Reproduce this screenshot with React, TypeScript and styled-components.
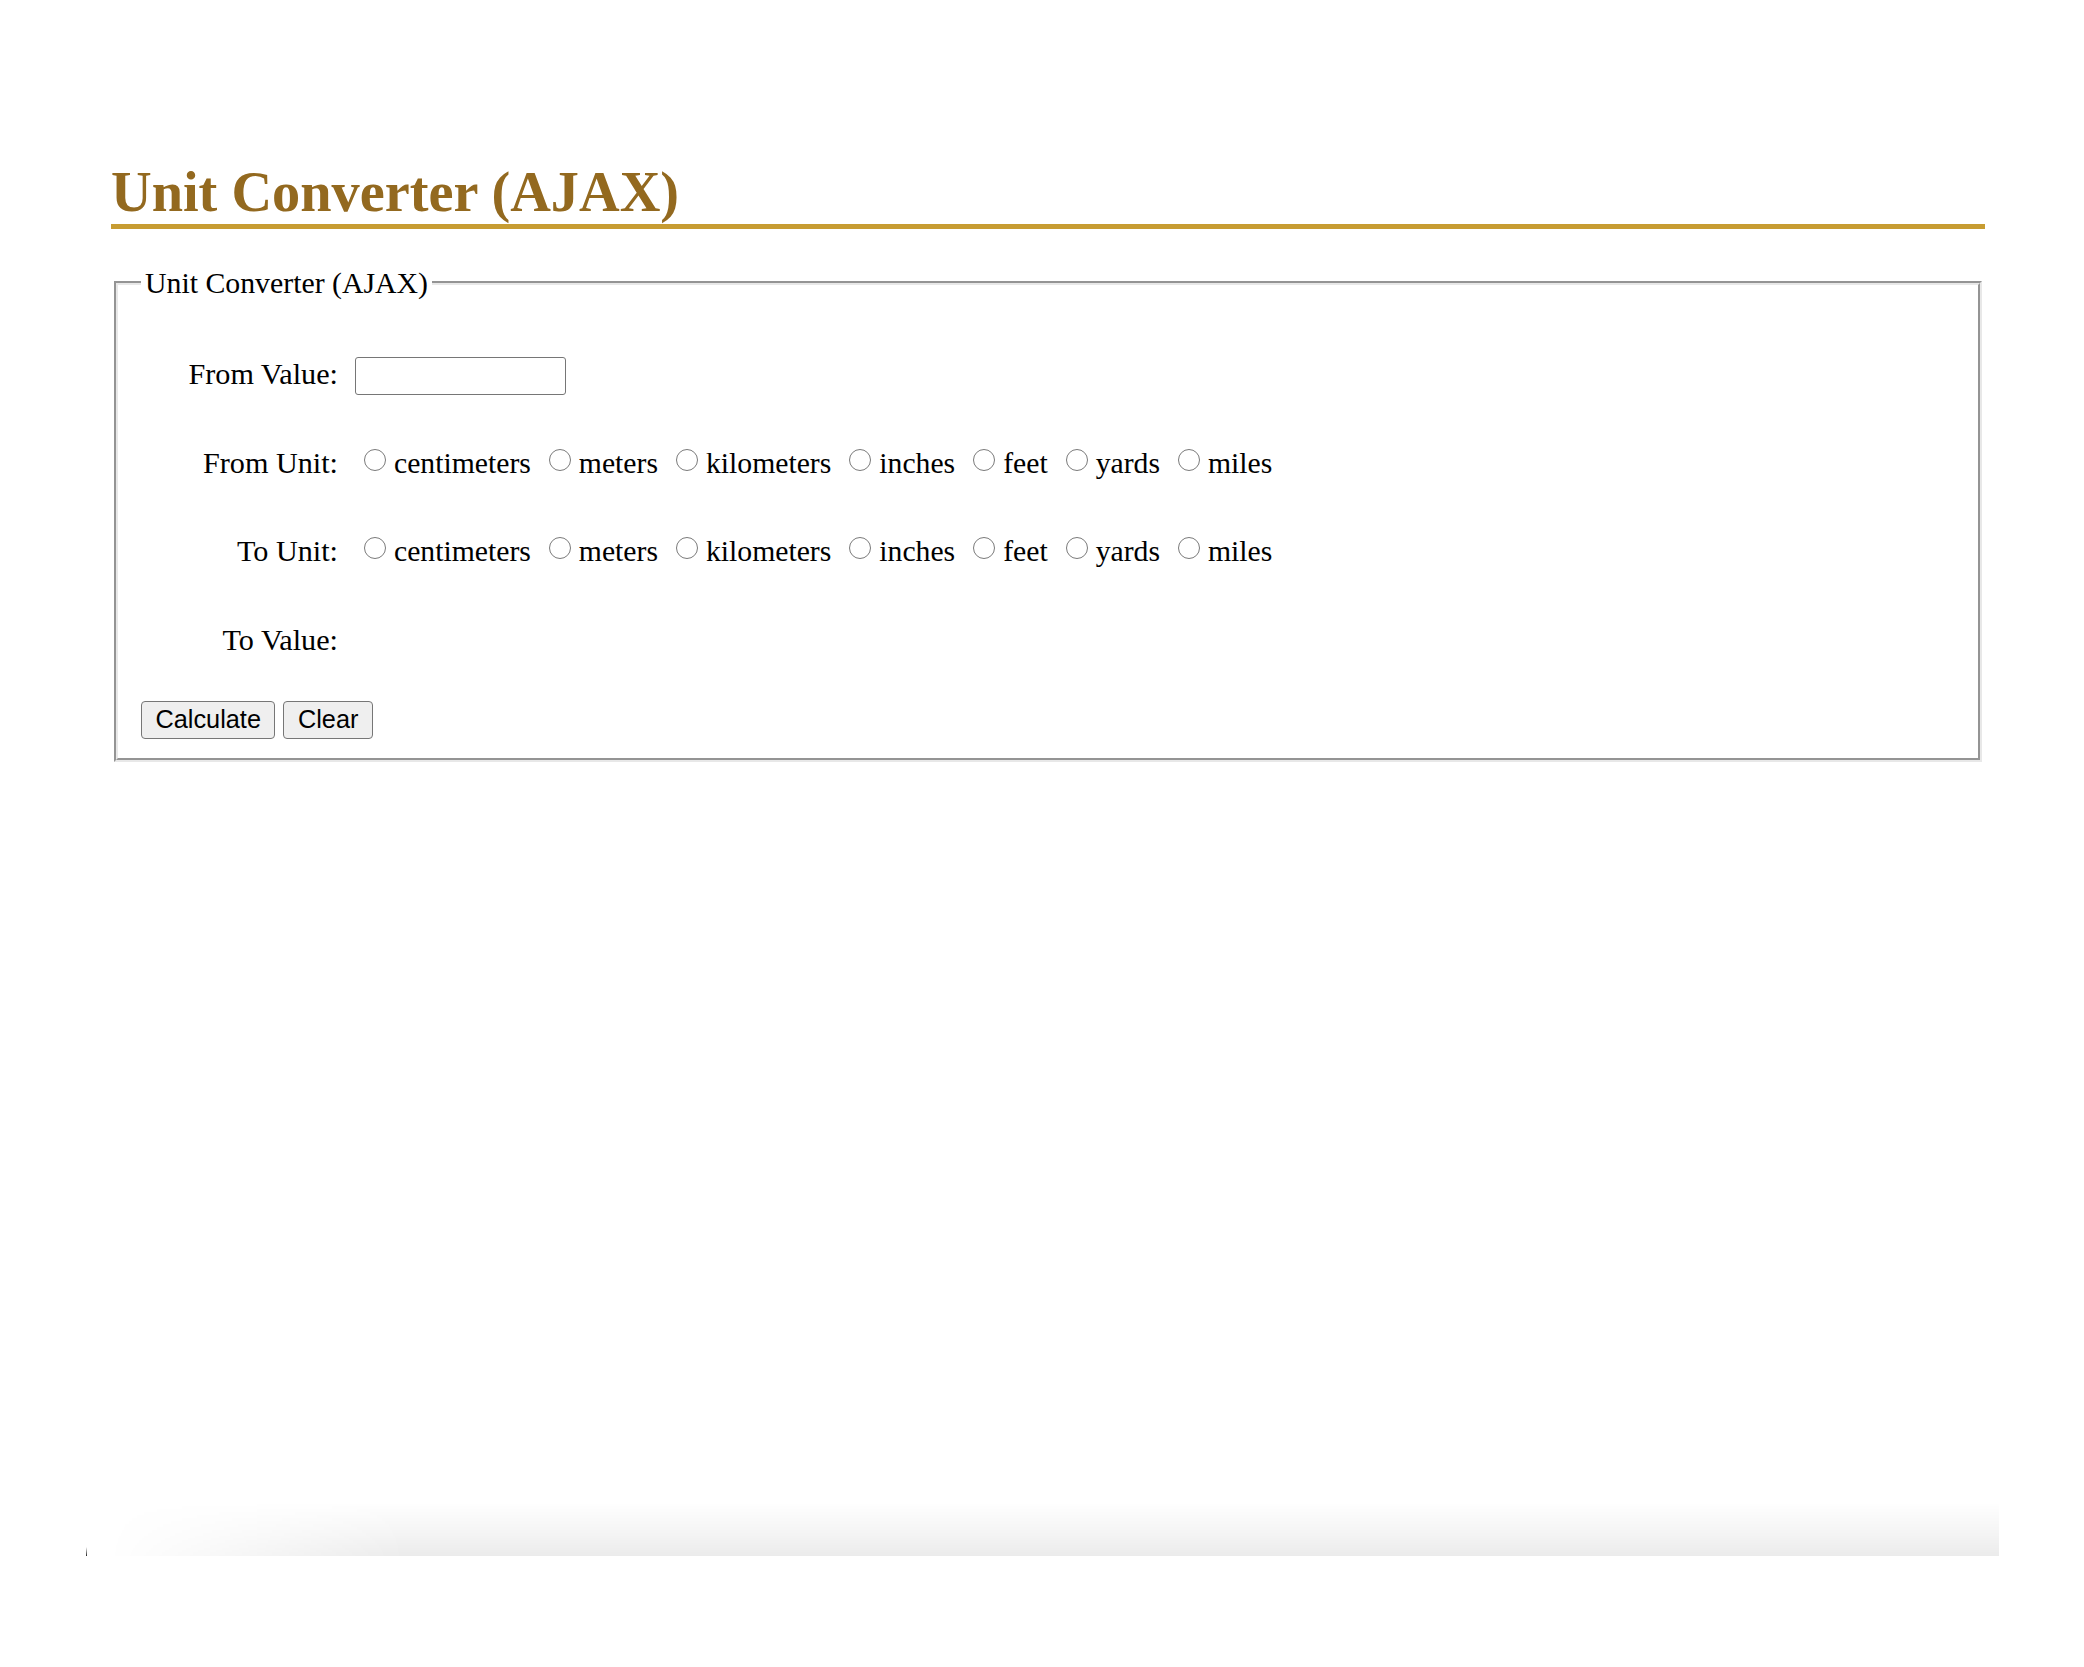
import React from "react";
import styled, { createGlobalStyle } from "styled-components";

const GlobalStyle = createGlobalStyle`
  html, body {
    margin: 0;
    padding: 0;
    background: #ffffff;
  }
  body {
    font-family: "Liberation Serif", "Times New Roman", serif;
    color: #000000;
  }
`;

const Page = styled.div`
  padding: 160px 99px 110px 111px;
`;

const Title = styled.h1`
  margin: 0;
  font-family: "Liberation Serif", "Times New Roman", serif;
  font-size: 56.3px;
  line-height: 64px;
  font-weight: bold;
  color: #93691f;
  border-bottom: 5px solid #c79c32;
`;

const Fieldset = styled.fieldset`
  margin: 37px 3px 0;
  padding: 29.6px 23px 19px;
  border: 4px groove #e8e8e8;
  min-width: 0;
`;

const Legend = styled.legend`
  padding: 0 4px;
  font-size: 29.8px;
  line-height: 34px;
`;

const FormGrid = styled.div`
  display: grid;
  grid-template-columns: 197px 1fr;
  grid-auto-rows: 88.7px;
  column-gap: 17px;
  align-items: center;
  font-size: 29.7px;
  line-height: 34px;
`;

const Label = styled.div`
  text-align: right;
  white-space: nowrap;
  font-size: 30.2px;
`;

const TextInput = styled.input`
  justify-self: start;
  width: 211px;
  height: 38.6px;
  box-sizing: border-box;
  margin: 4px 0 0;
  padding: 2px 6px;
  border: 1.5px solid #767676;
  border-radius: 3px;
  background: #ffffff;
  font-family: "Liberation Sans", Arial, sans-serif;
  font-size: 24px;
`;

const Options = styled.div`
  display: flex;
  align-items: baseline;
  white-space: nowrap;
  margin-left: -1px;
`;

const Option = styled.label`
  display: inline-block;
  & + & {
    margin-left: 8px;
  }
`;

const Radio = styled.input`
  appearance: none;
  -webkit-appearance: none;
  display: inline-block;
  vertical-align: 2px;
  box-sizing: border-box;
  width: 22px;
  height: 22px;
  margin: 0 8px 0 10px;
  border: 1.5px solid #7a7a7a;
  border-radius: 50%;
  background: #ffffff;
`;

const Value = styled.div``;

const ButtonRow = styled.div`
  display: flex;
  gap: 8px;
  margin-top: 16.25px;
`;

const Button = styled.button`
  height: 38.6px;
  padding: 0 13.5px;
  border: 1.5px solid #767676;
  border-radius: 4px;
  background: #efefef;
  color: #000000;
  font-family: "Liberation Sans", Arial, sans-serif;
  font-size: 25.3px;
  line-height: 1;
`;

const Footer = styled.div`
  display: flex;
  align-items: flex-end;
  height: 60px;
  margin: 734px -14px 0 -25px;
`;

const Tick = styled.div`
  width: 1px;
  height: 9px;
  background: linear-gradient(to bottom, rgba(0, 0, 0, 0), #222222);
`;

const Shade = styled.div`
  flex: 1;
  align-self: stretch;
  background: linear-gradient(to bottom, rgba(0, 0, 0, 0) 10%, rgba(0, 0, 0, 0.04) 60%, rgba(0, 0, 0, 0.08));
  -webkit-mask-image: linear-gradient(to right, transparent 20px, #000 320px);
  mask-image: linear-gradient(to right, transparent 20px, #000 320px);
`;

const UNITS = ["centimeters", "meters", "kilometers", "inches", "feet", "yards", "miles"];

const UnitChoice: React.FC<{ name: string }> = ({ name }) => (
  <Options>
    {UNITS.map((u) => (
      <Option key={u}>
        <Radio type="radio" name={name} value={u} />
        {u}
      </Option>
    ))}
  </Options>
);

export default function App() {
  return (
    <>
      <GlobalStyle />
      <Page>
        <Title>Unit Converter (AJAX)</Title>
        <Fieldset>
          <Legend>Unit Converter (AJAX)</Legend>
          <FormGrid>
            <Label>From Value:</Label>
            <TextInput type="text" />
            <Label>From Unit:</Label>
            <UnitChoice name="fromUnit" />
            <Label>To Unit:</Label>
            <UnitChoice name="toUnit" />
            <Label>To Value:</Label>
            <Value />
          </FormGrid>
          <ButtonRow>
            <Button type="button">Calculate</Button>
            <Button type="button">Clear</Button>
          </ButtonRow>
        </Fieldset>
        <Footer>
          <Tick />
          <Shade />
        </Footer>
      </Page>
    </>
  );
}
